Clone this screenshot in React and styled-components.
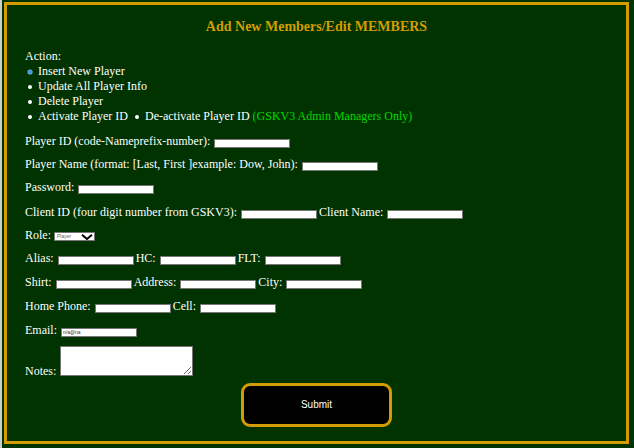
import React from 'react';
import styled, { createGlobalStyle } from 'styled-components';

const GlobalStyle = createGlobalStyle`
  html, body {
    margin: 0;
    padding: 0;
    background-color: #003300;
  }
  body {
    font-family: "Liberation Serif", "Times New Roman", serif;
    color: #ffffff;
  }
`;

const StyledPage = styled.div`
  width: 634px;
  height: 448px;
  box-sizing: border-box;
  padding: 2px 5px 4px 2px;
  border-left: 2px solid #c8d0c8;
  background-color: #003300;
`;

const StyledFrame = styled.div`
  height: 100%;
  box-sizing: border-box;
  border: 3px solid #d39c00;
  padding: 13px 18px 0 18px;
  font-family: "Liberation Serif", "Times New Roman", serif;
  font-size: 12px;
  line-height: 15px;
`;

const Title = styled.h1`
  margin: 0 0 14px 0;
  text-align: center;
  color: #d39c00;
  font-size: 14px;
  line-height: 17px;
  font-weight: bold;
`;

const ActionList = styled.div`
  display: flex;
  flex-direction: column;
  margin-bottom: 10px;
`;

const ActionItem = styled.div`
  display: flex;
  align-items: center;
  height: 15px;
  white-space: nowrap;
`;

const Bullet = styled.span`
  flex: none;
  width: 4px;
  height: 4px;
  border-radius: 50%;
  margin: 1px 6px 0 ${({ inline }) => (inline ? '7px' : '3px')};
  background-color: ${({ checked }) => (checked ? '#3d8fe0' : '#ffffff')};
  box-shadow: ${({ checked }) => (checked ? '0 0 0 0.5px #9cc4ee' : 'none')};
`;

const Note = styled.span`
  color: #00d800;
  margin-left: 3px;
`;

const Row = styled.div`
  display: flex;
  align-items: center;
  height: 15px;
  margin-bottom: ${({ gap }) => gap || '8.5px'};
  white-space: nowrap;
`;

const Field = styled.span`
  display: inline-block;
  flex: none;
  width: 73px;
  height: 7px;
  margin: 4px 2px 0 4px;
  padding-left: 1px;
  background-color: #ffffff;
  border: 1px solid #767676;
  font-family: "Liberation Sans", Arial, sans-serif;
  font-size: 5px;
  line-height: 7px;
  color: #333333;
  overflow: hidden;
`;

const FakeSelect = styled.span`
  display: inline-flex;
  flex: none;
  align-items: center;
  justify-content: space-between;
  width: 36px;
  height: 7px;
  margin: 3px 0 0 3px;
  padding: 0 1px 0 2px;
  background-color: #ffffff;
  border: 1px solid #767676;
  font-family: "Liberation Sans", Arial, sans-serif;
  font-size: 5px;
  line-height: 7px;
  color: #666666;
`;

const NotesRow = styled.div`
  display: flex;
  align-items: flex-end;
  margin-top: 8px;
`;

const NotesLabel = styled.span`
  line-height: 9px;
`;

const NotesArea = styled.textarea`
  width: 131px;
  height: 28px;
  margin: 0 0 0 4px;
  padding: 0;
  border: 1px solid #767676;
  background-color: #ffffff;
  resize: both;
  font-size: 6px;
`;

const ButtonRow = styled.div`
  display: flex;
  justify-content: center;
  margin-top: 7px;
`;

const SubmitButton = styled.button`
  width: 151px;
  height: 44px;
  background-color: #000000;
  border: 3px solid #d39c00;
  border-radius: 9px;
  color: #ffffff;
  font-family: "Liberation Sans", Arial, sans-serif;
  font-size: 10px;
  cursor: pointer;
`;

const Chevron = () => (
  <svg width="12" height="6" viewBox="0 0 12 6">
    <path d="M1 0.8 L6 5 L11 0.8" fill="none" stroke="#000" strokeWidth="2" />
  </svg>
);

const App = () => (
  <>
    <GlobalStyle />
    <StyledPage>
      <StyledFrame>
        <Title>Add New Members/Edit MEMBERS</Title>
        <ActionList>
          <ActionItem>Action:</ActionItem>
          <ActionItem>
            <Bullet checked />
            Insert New Player
          </ActionItem>
          <ActionItem>
            <Bullet />
            Update All Player Info
          </ActionItem>
          <ActionItem>
            <Bullet />
            Delete Player
          </ActionItem>
          <ActionItem>
            <Bullet />
            Activate Player ID
            <Bullet inline />
            De-activate Player ID
            <Note>(GSKV3 Admin Managers Only)</Note>
          </ActionItem>
        </ActionList>

        <Row gap="7.5px">
          Player ID (code-Nameprefix-number):
          <Field />
        </Row>
        <Row>
          Player Name (format: [Last, First ]example: Dow, John):
          <Field />
        </Row>
        <Row gap="10px">
          Password:
          <Field />
        </Row>
        <Row gap="7.5px">
          Client ID (four digit number from GSKV3):
          <Field />
          Client Name:
          <Field />
        </Row>
        <Row>
          Role:
          <FakeSelect>
            Player
            <Chevron />
          </FakeSelect>
        </Row>
        <Row gap="9px">
          Alias:
          <Field />
          HC:
          <Field />
          FLT:
          <Field />
        </Row>
        <Row gap="9px">
          Shirt:
          <Field />
          Address:
          <Field />
          City:
          <Field />
        </Row>
        <Row>
          Home Phone:
          <Field />
          Cell:
          <Field />
        </Row>
        <Row gap="0">
          Email:
          <Field>n/a@na</Field>
        </Row>
        <NotesRow>
          <NotesLabel>Notes:</NotesLabel>
          <NotesArea />
        </NotesRow>
        <ButtonRow>
          <SubmitButton>Submit</SubmitButton>
        </ButtonRow>
      </StyledFrame>
    </StyledPage>
  </>
);

export default App;
